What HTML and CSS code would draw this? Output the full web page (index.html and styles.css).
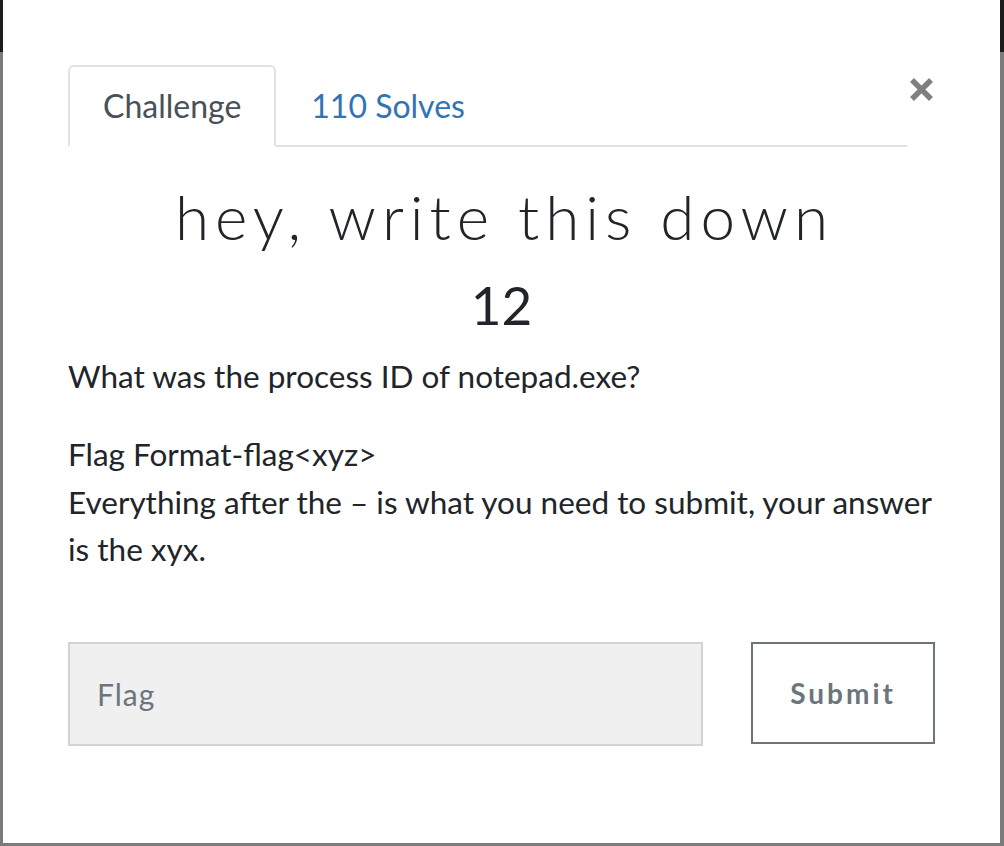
FILE: index.html
```html
<!DOCTYPE html>
<html>
<head>
<meta charset="utf-8">
<link rel="stylesheet" href="styles.css">
</head>
<body>
<div class="backdrop">
  <div class="modal">
    <div class="top">
      <ul class="tabs">
        <li class="tab active">Challenge</li>
        <li class="tab">110 Solves</li>
      </ul>
      <button class="close" aria-label="Close">
        <svg width="25" height="25" viewBox="0 0 25 25"><path d="M3 3 L22 22 M22 3 L3 22" stroke="#808080" stroke-width="5.5" stroke-linecap="butt" fill="none"/></svg>
      </button>
    </div>
    <h2 class="name">hey, write this down</h2>
    <h3 class="value">12</h3>
    <div class="desc">
      <p class="q">What was the process ID of notepad.exe?</p>
      <p class="fmt">Flag Format-flag&lt;xyz&gt;<br>Everything after the – is what you need to submit, your answer is the xyx.</p>
    </div>
    <div class="form">
      <input class="flag" type="text" placeholder="Flag">
      <button class="submit">Submit</button>
    </div>
  </div>
</div>
</body>
</html>
```
FILE: styles.css
```css
html, body {
  margin: 0;
  padding: 0;
}
body {
  font-family: Lato, "Liberation Sans", sans-serif;
  color: #212529;
}
.backdrop {
  width: 1004px;
  height: 846px;
  background: linear-gradient(#1c1c1c 0, #1c1c1c 52px, #7b7b7b 52px);
  padding: 0 4px 3px 3px;
  box-sizing: border-box;
}
.modal {
  background: #fff;
  height: 843px;
  padding: 65px 65px 0 65px;
  box-sizing: border-box;
}
.top {
  display: flex;
  align-items: flex-start;
}
.tabs {
  list-style: none;
  margin: 0;
  padding: 0;
  display: flex;
  flex: 1;
  border-bottom: 2px solid #dee2e6;
  height: 82px;
  box-sizing: border-box;
}
.tab {
  font-size: 32px;
  line-height: 48px;
  padding: 15px 33px 15px 33px;
  color: #3273b5;
  border: 2px solid transparent;
  border-radius: 6px 6px 0 0;
  box-sizing: border-box;
  height: 82px;
}
.tab.active {
  color: #495057;
  border-color: #dee2e6 #dee2e6 #fff;
  background: #fff;
}
.close {
  background: none;
  border: 0;
  padding: 0;
  margin: 12px 1px 0 2px;
  width: 25px;
  height: 25px;
  cursor: pointer;
}
.close svg { display: block; }
.name {
  font-family: Lato, sans-serif;
  font-weight: 300;
  font-size: 62px;
  letter-spacing: 6px;
  padding-left: 6px;
  text-align: center;
  margin: 29px 0 0;
  line-height: 80px;
}
.value {
  font-family: Lato, sans-serif;
  font-weight: 400;
  font-size: 53px;
  text-align: center;
  margin: 17px 0 0;
  line-height: 64px;
}
.desc {
  font-size: 31.5px;
  line-height: 1.5;
  margin-top: 16px;
}
.desc p { margin: 0 0 31px; }
.desc p:last-child { margin-bottom: 0; }
.form {
  display: flex;
  gap: 48px;
  margin-top: 69px;
}
.flag {
  width: 636px;
  height: 104px;
  box-sizing: border-box;
  background: #f0f0f0;
  border: 2px solid #ced4da;
  font-family: Lato, sans-serif;
  font-size: 30px;
  letter-spacing: 1px;
  padding: 0 27px;
  color: #495057;
  outline: none;
}
.flag::placeholder {
  color: #6c757d;
}
.submit {
  width: 184px;
  height: 102px;
  box-sizing: border-box;
  background: #fff;
  border: 2px solid #6c757d;
  color: #6c757d;
  font-family: Lato, sans-serif;
  font-weight: 700;
  font-size: 28px;
  letter-spacing: 3px;
  padding-left: 6px;
}
```
